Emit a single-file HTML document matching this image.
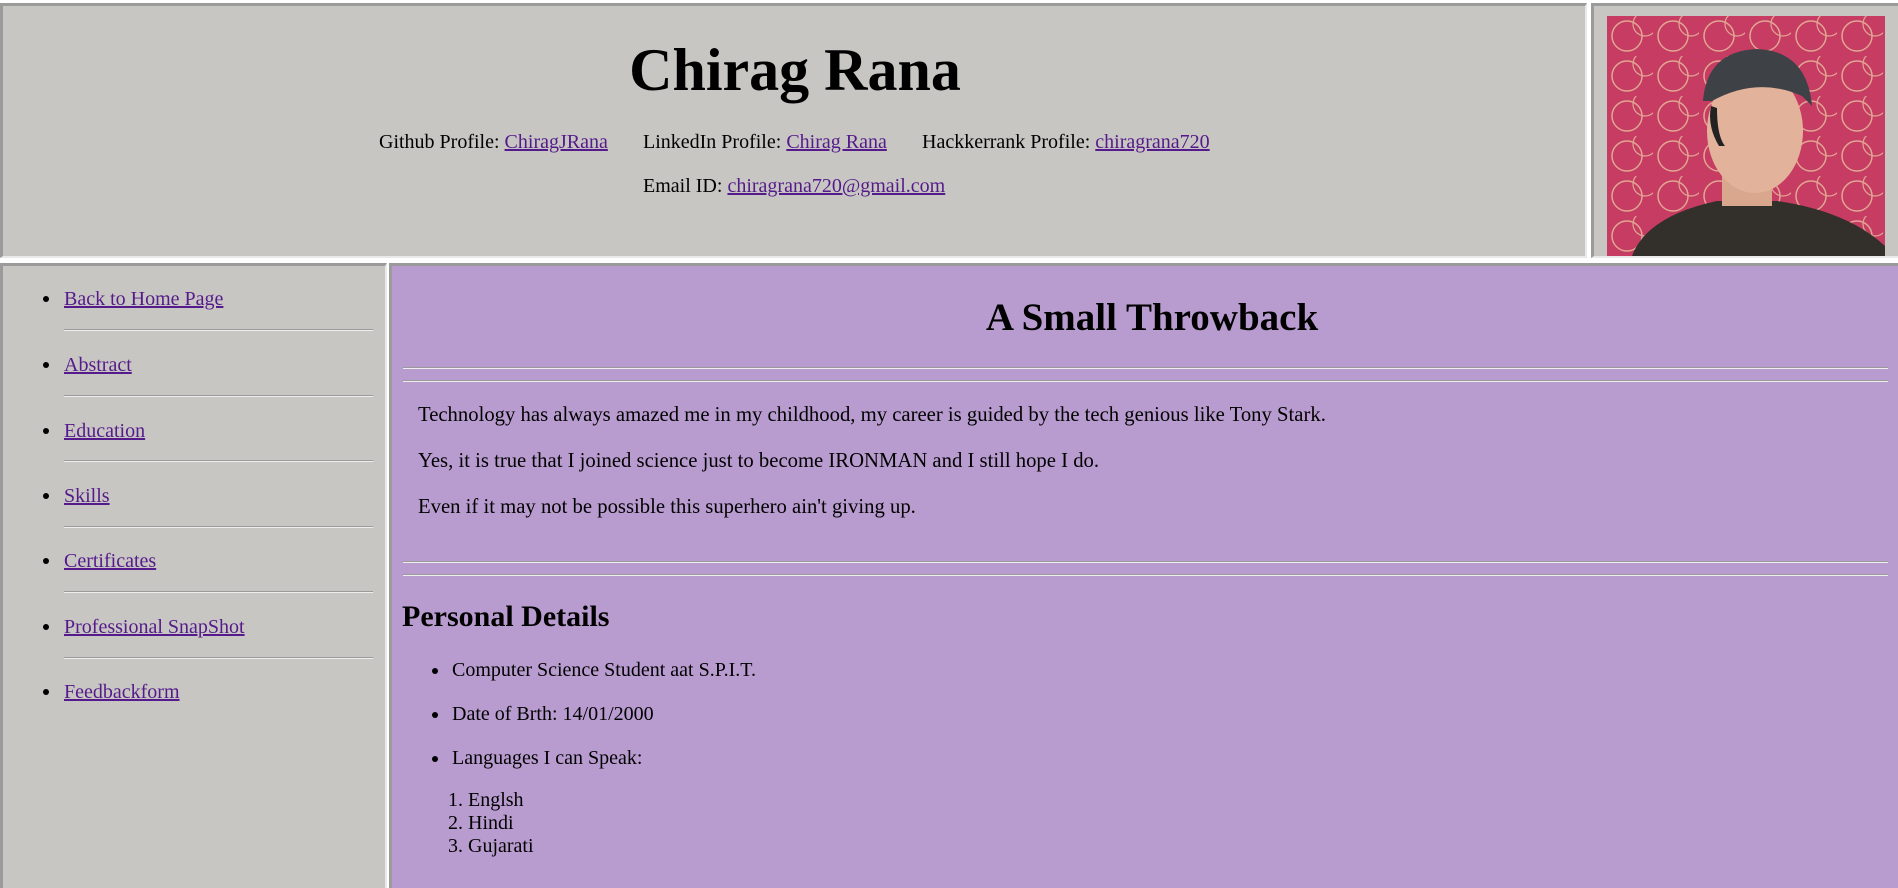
<!DOCTYPE html>
<html style="overflow:hidden;height:888px"><head><meta charset="utf-8"><style>
body{margin:0;width:1898px;height:888px;background:#fff;position:relative;overflow:hidden;font-family:"Liberation Serif",serif;font-size:20px;color:#000}
.f{position:absolute;box-sizing:border-box;border-top:3px solid #9b9b9b;border-left:3px solid #9b9b9b;border-right:2px solid #e9e9e9;border-bottom:2px solid #e9e9e9;background:#c7c6c2;overflow:hidden}
.a{position:absolute;white-space:nowrap;line-height:1}
a{color:#551a8b;text-decoration:underline}
.hr{position:absolute;height:0;border-top:1px solid #9a9a9a;border-bottom:1px solid #eee}
.b{position:absolute;width:6px;height:6px;border-radius:50%;background:#000}
</style></head><body>
<div class="f" style="left:0;top:3px;width:1587px;height:255px"></div>
<div class="f" style="left:1591px;top:3px;width:307px;height:255px;border-right:0"></div>
<svg style="position:absolute;left:1607px;top:16px" width="278" height="240" viewBox="0 0 278 240">
<defs><pattern id="p" width="46" height="40" patternUnits="userSpaceOnUse"><circle cx="20" cy="20" r="15" fill="none" stroke="#e8c0a0" stroke-width="1.5"/><circle cx="38" cy="8" r="12" fill="none" stroke="#e8c0a0" stroke-width="1.2"/></pattern></defs>
<rect width="278" height="240" fill="#c63c62"/><rect width="278" height="240" fill="url(#p)" opacity=".8"/>
<path d="M25 240 Q40 200 110 185 L170 185 Q240 195 278 230 L278 240Z" fill="#33302b"/>
<rect x="115" y="150" width="50" height="40" fill="#d9a78e"/>
<ellipse cx="148" cy="115" rx="48" ry="62" fill="#e2b39a"/>
<path d="M96 85 Q100 35 150 33 Q200 35 205 90 L195 80 Q150 60 105 85Z" fill="#3e4146"/>
<path d="M110 92 Q110 120 118 130 L112 130 Q100 110 104 90Z" fill="#222"/>
</svg>
<div class="a" style="left:0;width:1590px;text-align:center;top:40px;font-size:60px;font-weight:bold">Chirag Rana</div>
<div class="a" style="left:379px;top:132px">Github Profile: <a>ChiragJRana</a></div>
<div class="a" style="left:643px;top:132px">LinkedIn Profile: <a>Chirag Rana</a></div>
<div class="a" style="left:922px;top:132px">Hackkerrank Profile: <a>chiragrana720</a></div>
<div class="a" style="left:643px;top:176px">Email ID: <a>chiragrana720@gmail.com</a></div>

<div class="f" style="left:0;top:263px;width:387px;height:630px"></div>
<div class="f" style="left:389px;top:263px;width:1509px;height:630px;background:#b99ccf;border-right:0"></div>

<div class="b" style="left:43px;top:296px"></div><div class="a" style="left:64px;top:289px"><a>Back to Home Page</a></div>
<div class="hr" style="left:64px;width:309px;top:329px"></div>
<div class="b" style="left:43px;top:362px"></div><div class="a" style="left:64px;top:355px"><a>Abstract</a></div>
<div class="hr" style="left:64px;width:309px;top:395px"></div>
<div class="b" style="left:43px;top:428px"></div><div class="a" style="left:64px;top:421px"><a>Education</a></div>
<div class="hr" style="left:64px;width:309px;top:460px"></div>
<div class="b" style="left:43px;top:493px"></div><div class="a" style="left:64px;top:486px"><a>Skills</a></div>
<div class="hr" style="left:64px;width:309px;top:526px"></div>
<div class="b" style="left:43px;top:558px"></div><div class="a" style="left:64px;top:551px"><a>Certificates</a></div>
<div class="hr" style="left:64px;width:309px;top:591px"></div>
<div class="b" style="left:43px;top:624px"></div><div class="a" style="left:64px;top:617px"><a>Professional SnapShot</a></div>
<div class="hr" style="left:64px;width:309px;top:657px"></div>
<div class="b" style="left:43px;top:689px"></div><div class="a" style="left:64px;top:682px"><a>Feedbackform</a></div>

<div class="a" style="left:392px;width:1506px;text-align:center;top:298px;font-size:39px;font-weight:bold;padding-left:14px;box-sizing:border-box">A Small Throwback</div>
<div class="hr" style="left:403px;width:1485px;top:367px"></div>
<div class="hr" style="left:403px;width:1485px;top:380px"></div>
<div class="a" style="left:418px;top:405px;font-size:20.7px">Technology has always amazed me in my childhood, my career is guided by the tech genious like Tony Stark.</div>
<div class="a" style="left:418px;top:451px;font-size:20.7px">Yes, it is true that I joined science just to become IRONMAN and I still hope I do.</div>
<div class="a" style="left:418px;top:497px;font-size:20.7px">Even if it may not be possible this superhero ain't giving up.</div>
<div class="hr" style="left:403px;width:1485px;top:561px"></div>
<div class="hr" style="left:403px;width:1485px;top:574px"></div>
<div class="a" style="left:402px;top:602px;font-size:30px;font-weight:bold">Personal Details</div>
<div class="b" style="left:432px;top:668px"></div><div class="a" style="left:452px;top:660px">Computer Science Student aat S.P.I.T.</div>
<div class="b" style="left:432px;top:712px"></div><div class="a" style="left:452px;top:704px">Date of Brth: 14/01/2000</div>
<div class="b" style="left:432px;top:756px"></div><div class="a" style="left:452px;top:748px">Languages I can Speak:</div>
<div class="a" style="left:448px;top:790px">1. Englsh</div>
<div class="a" style="left:448px;top:813px">2. Hindi</div>
<div class="a" style="left:448px;top:836px">3. Gujarati</div>
</body></html>
